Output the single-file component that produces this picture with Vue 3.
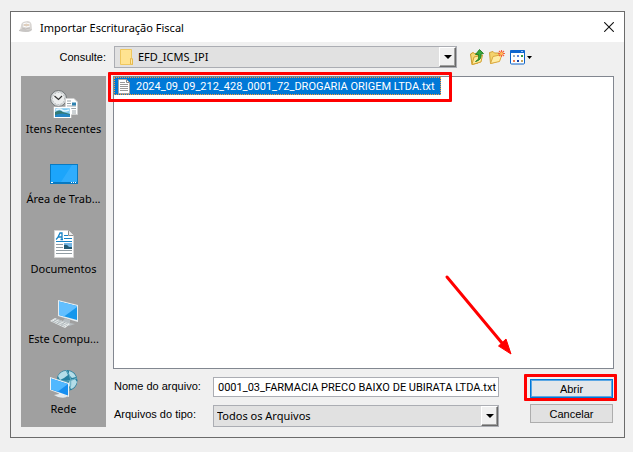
<script setup>
import { ref, onMounted } from 'vue'

const folder = ref('EFD_ICMS_IPI')
const fileType = ref('Todos os Arquivos')
const fileName = ref('0001_03_FARMACIA PRECO BAIXO DE UBIRATA LTDA.txt')
const files = ['2024_09_09_212_428_0001_72_DROGARIA ORIGEM LTDA.txt']
const places = [
  { id: 'recent', label: 'Itens Recentes' },
  { id: 'desktop', label: 'Área de Trab...' },
  { id: 'documents', label: 'Documentos' },
  { id: 'computer', label: 'Este Compu...' },
  { id: 'network', label: 'Rede' }
]

const nameField = ref(null)
onMounted(() => {
  // Long names show their end, with the extension in view.
  nameField.value.scrollLeft = nameField.value.scrollWidth
})
</script>

<template>
  <main class="page">
    <section class="dialog" role="dialog" aria-labelledby="dialog-title">
      <header class="titlebar">
        <svg class="app-icon" viewBox="0 0 14 14" aria-hidden="true">
          <path d="M2 6Q2 2 6 1.5Q11 0 12.5 4L13 10L9 12L1 10Z" fill="#d9d6d3" />
          <path d="M0 10Q4 8 8 10L13 9L12 11Q7 13 0 11Z" fill="#c8c6c4" />
          <path d="M4 4Q7 2 11 4M4 6Q7 8 11 6" fill="none" stroke="#fff" />
          <path d="M5 5H10" stroke="#e6c8a8" />
          <path d="M3 8Q6 10 11 8" fill="none" stroke="#b5b2b0" stroke-width=".7" />
        </svg>
        <h1 id="dialog-title">Importar Escrituração Fiscal</h1>
        <button class="close" type="button" aria-label="Fechar">
          <svg viewBox="0 0 10 10"><path d="M.2.2L9.8 9.8M9.8.2L.2 9.8" stroke="#111" stroke-width="1.1" /></svg>
        </button>
      </header>

      <form class="body" @submit.prevent>
        <div class="lookup">
          <label for="folder">Consulte:</label>
          <div class="combo">
            <svg class="folder-icon" viewBox="0 0 13 16" aria-hidden="true">
              <path d="M.5.5H11.500V9L12.500 10V15.500H.5Z" fill="#ffe391" stroke="#efc75e" />
              <path d="M10.500 15V9.500L12.500 10V15.500Z" fill="#ffe9a6" stroke="#e6b94c" />
            </svg>
            <select id="folder" v-model="folder" class="with-icon"><option>EFD_ICMS_IPI</option></select>
            <span class="drop"></span>
          </div>
          <div class="tools">
            <button type="button" aria-label="Um nível acima">
              <svg width="14" height="16" viewBox="0 0 14 16">
                <path d="M.5 5L3 3.500L4.500 4.500H8V14L2 15.500Z" fill="#f5d876" stroke="#c9992b" />
                <path d="M2 15.500L4 8L12.500 6L11 13Z" fill="#ffeb9c" stroke="#d3a032" />
                <path d="M5.500 12.500Q9.500 11 8.500 5.500H5.500L9.500.5L13.500 4.500L11 5Q12 11 5.500 12.500Z" fill="#36a83b" stroke="#16731c" stroke-width=".8" />
              </svg>
            </button>
            <button type="button" aria-label="Criar nova pasta">
              <svg width="16" height="14" viewBox="0 0 16 14">
                <path d="M.5 2.500L4 1.500L5.500 3H10V11L1.500 13.500Z" fill="#f4d36d" stroke="#d2a33b" />
                <path d="M1.500 13.500L4 6.500L13 4.500L10.500 11.500Z" fill="#ffeda5" stroke="#dba940" />
                <path d="M12.500 0V7M9 3.500H16M10 1L15 6M15 1L10 6" stroke="#f4623a" stroke-width="1.100" />
                <circle cx="12.500" cy="3.500" r="1.500" fill="#ffc15a" />
              </svg>
            </button>
            <button class="view" type="button" aria-label="Menu Exibir">
              <svg width="22" height="15" viewBox="0 0 22 15">
                <rect x=".5" y=".5" width="14" height="13.500" rx="1" fill="#fff" stroke="#0b62c8" />
                <path d="M0 1Q0 0 1 0H14Q15 0 15 1V3H0Z" fill="#1067cf" />
                <path d="M11 1.500H13" stroke="#9bc8ff" />
                <path d="M3 5H5V7H3Z" fill="#9fb0bd" /><path d="M7 5H9V7H7Z" fill="#5b86db" /><path d="M11 5H13V7H11Z" fill="#3a9b45" />
                <path d="M3 10H5V12H3Z" fill="#ef8150" /><path d="M7 10H9V12H7Z" fill="#173fa0" /><path d="M11 10H13V12H11Z" fill="#c6a45e" />
                <path d="M17 6H22L19.500 9Z" fill="#000" />
              </svg>
            </button>
          </div>
        </div>

        <nav class="places">
          <button v-for="place in places" :key="place.id" type="button" class="place">
            <svg v-if="place.id === 'recent'" viewBox="0 0 28 28" aria-hidden="true">
              <circle cx="8.500" cy="8.500" r="8" fill="#d5d8d9" stroke="#707577" />
              <circle cx="8.500" cy="8.500" r="6" fill="#eceeee" stroke="#aaaeb0" stroke-dasharray="1 2" />
              <path d="M4.500 6L8.500 9.500L12 6" fill="none" stroke="#333" stroke-width="1.200" />
              <path d="M15.500 8.500H24L27.500 12V24.500H15.500Z" fill="#fff" stroke="#d0d0d0" />
              <path d="M17 11H21M17 13.500H21M17 16H26M17 18.500H26M22 21H26M22 23H26" stroke="#9aa3a8" />
              <path d="M22 12.500H26V15.500H22Z" fill="#2f82b0" />
              <rect x="4.500" y="17.500" width="16" height="10" fill="#82c9ef" stroke="#fff" stroke-width="1.500" />
              <path d="M5 22Q10 19 13 22L20 24V27H5Z" fill="#337a76" />
              <path d="M5 25Q12 22 20 25V27H5Z" fill="#2386c6" />
              <path d="M6 20Q10 18 12 20T19 20" fill="none" stroke="#e6f7ff" stroke-width="1.500" />
            </svg>
            <svg v-else-if="place.id === 'desktop'" viewBox="0 0 28 28" aria-hidden="true">
              <rect x=".5" y="4.500" width="27" height="19" fill="#1ca5fb" stroke="#087ac2" />
              <path d="M11 22L22 5H27V22Z" fill="#42b4ff" opacity=".55" />
              <path d="M1 22.500H27" stroke="#0878c0" />
              <path d="M1 22.500H3M21 22.500H22M23 22.500H24M25 22.500H26" stroke="#fff" />
            </svg>
            <svg v-else-if="place.id === 'documents'" viewBox="0 0 28 28" aria-hidden="true">
              <path d="M4.500.5H18.500L23.500 5.500V27.500H4.500Z" fill="#fff" stroke="#d4d4d4" />
              <path d="M18.500.5V5.500H23.500" fill="#eee" stroke="#8e8e8e" />
              <path d="M6 9.500Q8 8 10 3L12 3V9.500M8 7H12M10.500 9.500H13" fill="none" stroke="#1683c6" stroke-width="1.300" />
              <path d="M14 5.500H18M14 8.500H22M6 11.500H22" stroke="#1683c6" />
              <path d="M6 14.500H13M6 17.500H13M6 20.500H22M6 23.500H22" stroke="#929da3" />
              <rect x="14" y="13" width="8" height="6" fill="#76b6e4" />
              <path d="M14 15Q17 14 19 17L22 17V19H14Z" fill="#245b73" />
            </svg>
            <svg v-else-if="place.id === 'computer'" viewBox="0 0 28 28" aria-hidden="true">
              <path d="M8 0L28 5V22L8 16Z" fill="#e7edf0" />
              <path d="M9 1.500L27 6V20L9 15Z" fill="#1597ed" />
              <path d="M9 1.500L27 6V7L14 16.500L9 15Z" fill="#62bfff" />
              <path d="M15 18L20 20V23L25 24L19 26L12 22Z" fill="#b7bec2" />
              <path d="M0 21L5 18L20 24L15 28Z" fill="#e9eded" />
              <path d="M2 21L15 26.500M4 20L17 25.500M6 19L18 24M3 22L7 19M7 24L11 20.500M11 25.500L15 22" stroke="#a4acb0" stroke-width=".7" />
            </svg>
            <svg v-else viewBox="0 0 28 28" aria-hidden="true">
              <circle cx="17" cy="10.500" r="10.500" fill="#27809f" />
              <path d="M8 6Q11 1 16 1L18 5L14 8L10 10ZM19 1Q24 2 26 7L22 8L19 5ZM20 10L25 9L27 12Q25 18 21 19L18 14Z" fill="#b4dde8" />
              <path d="M7 9Q15 14 27 8M16 0Q24 9 19 21" fill="none" stroke="#64adc2" />
              <path d="M8 21L14 23V25L18 26Q15 29 8 27L4 25L9 24Z" fill="#e4eaed" />
              <path d="M0 7L19 13V27L0 20Z" fill="#eef2f4" />
              <path d="M1 8.500L18 14V25.500L1 19.500Z" fill="#178ff0" />
              <path d="M1 8.500L18 14L8 21.500L1 19.500Z" fill="#50b8ff" />
            </svg>
            <span>{{ place.label }}</span>
          </button>
        </nav>

        <div class="files">
          <ul class="list">
            <li v-for="file in files" :key="file">
              <button type="button" class="file">
                <svg width="12" height="15" viewBox="0 0 12 15" aria-hidden="true">
                  <path d="M.5.5H8.500L11.500 3.500V14.500H.5Z" fill="#fff" stroke="#a5a5a5" />
                  <path d="M8.500.5V3.500H11.500" fill="none" stroke="#888" />
                  <path d="M2 3.500H7M2 5.500H10M2 7.500H10M2 9.500H10M2 11.500H10" stroke="#999" />
                </svg>
                <span>{{ file }}</span>
              </button>
              <span class="highlight"></span>
            </li>
          </ul>
          <svg class="arrow" viewBox="0 0 68 82" aria-hidden="true">
            <path d="M3 3L58 69" stroke="red" stroke-width="3" stroke-linecap="round" />
            <path d="M67 80L54.500 72L62 65Z" fill="red" stroke="red" />
          </svg>
        </div>

        <div class="controls">
          <div class="fields">
            <label for="name">Nome do arquivo:</label>
            <input id="name" ref="nameField" v-model="fileName" type="text" spellcheck="false" />
            <label for="type">Arquivos do tipo:</label>
            <div class="combo">
              <select id="type" v-model="fileType"><option>Todos os Arquivos</option></select>
              <span class="drop"></span>
            </div>
          </div>
          <div class="actions">
            <div class="primary">
              <button type="submit" class="action open">Abrir</button>
              <span class="highlight"></span>
            </div>
            <button type="button" class="action">Cancelar</button>
          </div>
        </div>
      </form>
    </section>
  </main>
</template>

<style>
body {
  margin: 0;
  background: #f0f0f0;
}
</style>

<style scoped>
* {
  box-sizing: border-box;
}
.page {
  display: flex;
  min-height: 100vh;
  padding: 11px 8px 14px 10px;
  background: #f0f0f0;
  color: #000;
  font: 11px "Liberation Sans", Arial, sans-serif;
}
button,
input,
select {
  margin: 0;
  font: inherit;
  color: inherit;
}
button {
  padding: 0;
  border: 0;
  background: none;
}
svg {
  display: block;
  flex: none;
}
.dialog {
  display: flex;
  flex: 1;
  flex-direction: column;
  min-width: 0;
  border: 1px solid #6b6b6b;
}
.titlebar {
  display: flex;
  align-items: center;
  height: 30px;
  padding: 0 10px 0 8px;
  background: #fff;
}
.app-icon {
  width: 14px;
  height: 14px;
}
h1 {
  flex: 1;
  margin: 0 0 0 7px;
  font: 11px "Noto Sans", sans-serif;
}
.close svg {
  width: 10px;
  height: 10px;
}
.body {
  display: grid;
  flex: 1;
  grid-template-columns: 85px minmax(0, 1fr);
  grid-template-rows: 22px 1fr auto;
  gap: 8px 7px;
  padding: 4px 10px 10px;
}
.lookup {
  display: grid;
  grid-column: 1 / -1;
  grid-template-columns: 85px minmax(0, 1fr) 144px;
  align-items: center;
}
.lookup label {
  text-align: right;
}
.lookup .combo {
  margin: 0 13px 0 8px;
}
.combo {
  position: relative;
  display: flex;
  align-items: center;
  height: 22px;
  border: 1px solid #abadb3;
  background: #e1e1e1;
}
.combo select {
  width: 100%;
  height: 20px;
  padding: 0 20px 0 3px;
  border: 0;
  border-radius: 0;
  outline: 0;
  appearance: none;
  background: transparent;
  font: 11px/20px "Noto Sans", sans-serif;
}
.combo .with-icon {
  padding-left: 23px;
}
.folder-icon {
  position: absolute;
  left: 5px;
  width: 13px;
  height: 16px;
}
.drop {
  position: absolute;
  top: 0;
  right: 0;
  display: grid;
  place-items: center;
  width: 17px;
  height: 20px;
  border: 1px solid;
  border-color: #fff #696969 #696969 #fff;
  background: #f0f0f0;
  box-shadow: inset -1px -1px #a0a0a0;
  pointer-events: none;
}
.drop::after {
  border: solid transparent;
  border-width: 4px 4px 0;
  border-top-color: #000;
  content: "";
}
.tools {
  display: flex;
  align-items: center;
  gap: 5px;
}
.places {
  grid-row: 2 / 4;
  background: #a0a0a0;
}
.place {
  display: flex;
  flex-direction: column;
  align-items: center;
  gap: 2px;
  width: 100%;
  padding: 14px 0 8px;
  font: 11px/18px "Noto Sans", sans-serif;
  white-space: nowrap;
}
.place svg {
  width: 28px;
  height: 28px;
}
.files {
  position: relative;
  min-height: 120px;
  border: 1px solid #828790;
  background: #fff;
}
.list {
  margin: 0;
  padding: 0;
  list-style: none;
}
.list li {
  position: relative;
  width: max-content;
}
.file {
  display: flex;
  align-items: center;
  gap: 6px;
  height: 18px;
  padding: 0 5px 0 3px;
  border: 1px dotted #ff9a35;
  background: #0078d7;
  color: #fff;
  font-family: Roboto, "Liberation Sans", sans-serif;
}
.highlight {
  position: absolute;
  inset: -5px -11px -7px -6px;
  border: 3px solid red;
  border-radius: 1px;
  pointer-events: none;
}
.arrow {
  position: absolute;
  right: 101px;
  bottom: 12px;
  width: 68px;
  height: 82px;
}
.controls {
  display: flex;
  gap: 31px;
  padding-right: 1px;
}
.fields {
  display: grid;
  flex: 1;
  grid-template-columns: 100px minmax(0, 1fr);
  grid-template-rows: 20px 22px;
  gap: 8px 0;
}
.fields label {
  padding: 3px 0 0 1px;
}
.fields input {
  width: 100%;
  height: 20px;
  padding: 0 2px;
  border: 1px solid #abadb3;
  border-radius: 0;
  outline: 0;
  background: #fff;
  font-family: Roboto, "Liberation Sans", sans-serif;
  text-align: right;
}
.actions {
  display: flex;
  flex-direction: column;
  gap: 6px;
  width: 83px;
  padding-top: 2px;
}
.primary {
  position: relative;
}
.primary .highlight {
  inset: -5px -4px -3px -6px;
}
.action {
  display: block;
  width: 100%;
  height: 19px;
  border: 1px solid #adadad;
  background: #e1e1e1;
}
.open {
  border: 1px solid #0078d7;
  background: #e3e7ea;
  box-shadow: inset 0 0 0 1px #5ba7e4;
}
</style>
